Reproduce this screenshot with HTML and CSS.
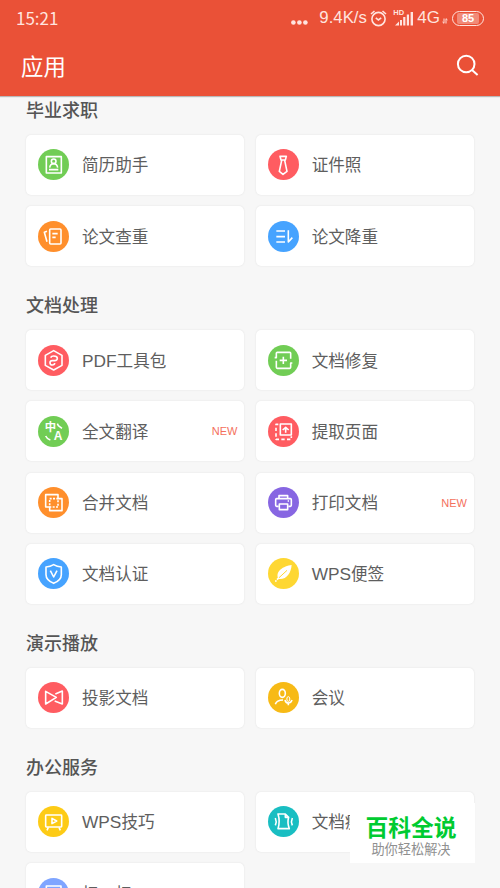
FILE: index.html
```html
<!DOCTYPE html>
<html lang="zh-CN">
<head>
  <meta charset="UTF-8">
  <title>应用</title>
  <link rel="stylesheet" href="styles.css">
</head>
<body>
<header class="header">
  <div class="status-bar">
    <span class="time">15:21</span>
    <div class="status-right">
      <svg class="dots" width="17" height="5" viewBox="0 0 17 5"><circle cx="2.4" cy="2.5" r="2.3"/><circle cx="8.4" cy="2.5" r="2.3"/><circle cx="14.4" cy="2.5" r="2.3"/></svg>
      <span class="speed">9.4K/s</span>
      <svg class="alarm" width="17" height="17" viewBox="0 0 17 17"><circle cx="8.5" cy="9" r="6.6"/><path d="M1 4L4.5 1M12.5 1L16 4M5.8 7.8L8.4 10L11.2 7.8"/></svg>
      <div class="signal">
        <span class="hd">HD</span>
        <svg width="20" height="15" viewBox="0 0 20 15"><path d="M1 14.5L5 10.5V14.5ZM6 9H8V14.5H6ZM9.2 6H11.4V14.5H9.2ZM12.8 3.5H15V14.5H12.8ZM16.6 1H19V14.5H16.6Z"/></svg>
      </div>
      <span class="network">4G</span>
      <svg class="updown" width="6" height="6" viewBox="0 0 6 6"><path d="M2 .5V5.3L.5 4M4 5.5V.7L5.5 2"/></svg>
      <span class="battery"><span>85</span></span>
    </div>
  </div>
  <div class="title-bar">
    <h1>应用</h1>
    <svg class="search" width="24" height="24" viewBox="0 0 24 24"><circle cx="10.2" cy="10" r="8.3"/><path d="M16 16L21.6 21"/></svg>
  </div>
</header>

<main class="content">
  <section class="group">
    <h2>毕业求职</h2>
    <div class="grid">
      <a class="card">
        <svg class="icon green" viewBox="0 0 93 93"><rect x="25" y="23" width="45" height="49"/><circle cx="47" cy="37" r="7"/><path d="M35 56Q37 44 47 44Q57 44 59 56M33 62H61"/></svg>
        <span class="name">简历助手</span>
      </a>
      <a class="card">
        <svg class="icon red" viewBox="0 0 93 93"><path d="M36 22H55L52 33H39ZM41 34L34 67L45 76L57 67L50 34"/></svg>
        <span class="name">证件照</span>
      </a>
      <a class="card">
        <svg class="icon orange" viewBox="0 0 93 93"><rect x="35" y="24" width="34" height="45" rx="3"/><path d="M43 38H59M43 49H53M27 31L19 34L27 62"/></svg>
        <span class="name">论文查重</span>
      </a>
      <a class="card">
        <svg class="icon blue" viewBox="0 0 93 93"><path d="M25 30H51M25 47H51M25 63H51M61 28V63L73 50"/></svg>
        <span class="name">论文降重</span>
      </a>
    </div>
  </section>

  <section class="group">
    <h2>文档处理</h2>
    <div class="grid">
      <a class="card">
        <svg class="icon red" viewBox="0 0 93 93"><path d="M47 17L72 31V61L47 75L22 61V31Z"/><path d="M38 38Q40 33 47 33Q58 33 58 40Q58 47 50 47H43Q36 47 36 53Q36 60 43 60Q50 60 50 54"/></svg>
        <span class="name"><span class="latin">PDF</span>工具包</span>
      </a>
      <a class="card">
        <svg class="icon green" viewBox="0 0 93 93"><path d="M20 38H25V25Q25 22 28 22H65Q68 22 68 25V41M25 47V67Q25 70 28 70H65Q68 70 68 67V54H73M46 35V57M35 46H57"/></svg>
        <span class="name">文档修复</span>
      </a>
      <a class="card">
        <svg class="icon green" viewBox="0 0 93 93"><text class="zh" x="20" y="45">中</text><text class="en" x="47" y="72">A</text><path d="M58 23L61 29L72 37M23 60Q27 69 37 72"/></svg>
        <span class="name">全文翻译</span>
        <span class="new">NEW</span>
      </a>
      <a class="card">
        <svg class="icon red" viewBox="0 0 93 93"><rect x="37" y="24" width="33" height="33"/><path d="M53 50V35M44 42L53 34L62 42"/><path class="dash" d="M31 25H24V70H70V61"/></svg>
        <span class="name">提取页面</span>
      </a>
      <a class="card">
        <svg class="icon orange" viewBox="0 0 93 93"><path d="M23 23H60V35H72V71H35V60H23Z"/><path class="dash-small" d="M35 35H60V60H35Z"/></svg>
        <span class="name">合并文档</span>
      </a>
      <a class="card">
        <svg class="icon purple" viewBox="0 0 93 93"><path d="M33 34V26H59V34M32 58H26Q23 58 23 55V38Q23 35 26 35H67Q70 35 70 38V55Q70 58 67 58H61M59 42H63"/><rect x="34" y="51" width="25" height="17"/></svg>
        <span class="name">打印文档</span>
        <span class="new">NEW</span>
      </a>
      <a class="card">
        <svg class="icon blue" viewBox="0 0 93 93"><path d="M47 20Q57 26 70 27V50Q70 66 47 76Q24 66 24 50V27Q37 26 47 20Z"/><path d="M37 38L47 57L57 38"/></svg>
        <span class="name">文档认证</span>
      </a>
      <a class="card">
        <svg class="icon yellow" viewBox="0 0 93 93"><path class="fill" d="M71 21C46 24 20 40 31 63C56 66 69 45 71 21Z"/><path class="vein" d="M57 37L31 61"/><path d="M33 59L27 65M21 69L26 69"/></svg>
        <span class="name"><span class="latin">WPS</span>便签</span>
      </a>
    </div>
  </section>

  <section class="group">
    <h2>演示播放</h2>
    <div class="grid">
      <a class="card">
        <svg class="icon red" viewBox="0 0 93 93"><path d="M23 28L55 46L23 66ZM52 36L73 27V66L50 57"/></svg>
        <span class="name">投影文档</span>
      </a>
      <a class="card">
        <svg class="icon gold" viewBox="0 0 93 93"><ellipse cx="43" cy="34" rx="9" ry="12"/><path d="M22 67Q26 54 45 54M51 54Q53 63 61 63Q69 63 72 54M61 63V70"/><ellipse class="thin" cx="61" cy="51" rx="4.5" ry="7"/></svg>
        <span class="name">会议</span>
      </a>
    </div>
  </section>

  <section class="group">
    <h2>办公服务</h2>
    <div class="grid">
      <a class="card">
        <svg class="icon amber" viewBox="0 0 93 93"><rect x="23" y="27" width="48" height="36" rx="2"/><path d="M42 37L56 45L42 53ZM31 64L27 73M63 64L67 73"/></svg>
        <span class="name"><span class="latin">WPS</span>技巧</span>
      </a>
      <a class="card">
        <svg class="icon teal" viewBox="0 0 93 93"><path d="M30 24H52L62 34Q57 50 64 68H30Q37 46 30 24ZM52 24V34H62M22 36Q27 47 22 58M73 36Q68 47 73 58"/></svg>
        <span class="name">文档瘦身</span>
      </a>
      <a class="card">
        <svg class="icon periwinkle" viewBox="0 0 93 93"><path d="M25 34V24H69V34M25 60V70H69V60M20 47H74"/></svg>
        <span class="name">扫一扫</span>
      </a>
    </div>
  </section>
</main>

<div class="watermark">
  <strong>百科全说</strong>
  <span>助你轻松解决</span>
</div>
</body>
</html>
```
FILE: styles.css
```css
* {
  box-sizing: border-box;
}

body {
  margin: 0;
  height: 888px;
  overflow: hidden;
  display: flex;
  flex-direction: column;
  background: #f7f7f7;
  color: #5e5e5e;
  font-family: "Liberation Sans", "Noto Sans CJK SC", sans-serif;
}

.header {
  flex: none;
  height: 96px;
  background: #ea5137;
  color: #ffe4df;
  box-shadow: 0 1px 1px rgba(0, 0, 0, 0.25);
  z-index: 1;
}

.status-bar {
  display: flex;
  align-items: center;
  justify-content: space-between;
  height: 36px;
  padding: 0 16px;
}

.time {
  font-family: "Noto Sans CJK SC", sans-serif;
  font-size: 17px;
  line-height: 36px;
}

.status-right {
  display: flex;
  align-items: center;
}

.status-right svg {
  fill: currentColor;
}

.dots {
  margin: 8px 11px 0 0;
}

.speed {
  width: 49px;
  font-size: 16.8px;
}

.status-right .alarm {
  margin: 0 7px 0 2px;
  fill: none;
  stroke: currentColor;
  stroke-width: 1.6;
}

.signal {
  position: relative;
  display: flex;
  margin-right: 3px;
}

.hd {
  position: absolute;
  left: -1px;
  top: -2px;
  font-size: 7.5px;
  font-weight: bold;
  line-height: 7px;
}

.network {
  font-size: 17px;
}

.status-right .updown {
  margin: 6px 4px 0 2px;
  fill: none;
  stroke: currentColor;
}

.battery {
  display: flex;
  width: 32px;
  height: 15px;
  padding: 1px 4px;
  border: 1.5px solid #ffe4df;
  border-radius: 8px;
}

.battery span {
  flex: 1;
  background: #f18a78;
  border-radius: 2px;
  color: #fff;
  font-size: 11px;
  font-weight: bold;
  line-height: 11px;
  text-align: center;
}

.title-bar {
  display: flex;
  align-items: center;
  justify-content: space-between;
  height: 60px;
  padding: 0 20px 0 21px;
}

.title-bar h1 {
  margin: -2px 0 0;
  color: #fff;
  font-size: 22.4px;
  font-weight: 400;
}

.search {
  fill: none;
  stroke: #fff;
  stroke-width: 2;
}

.content {
  flex: 1;
  min-height: 0;
  overflow: hidden;
  padding: 0 26px;
}

.group {
  margin-bottom: 25.1px;
}

.group h2 {
  margin: 0;
  height: 38.9px;
  color: #555;
  font-size: 18px;
  font-weight: 500;
  line-height: 30px;
}

.grid {
  display: grid;
  grid-template-columns: 1fr 1fr;
  grid-auto-rows: 60px;
  gap: 11.25px;
}

.card {
  display: flex;
  align-items: center;
  padding: 0 7px 0 12px;
  background: #fff;
  border-radius: 5px;
  box-shadow: 0 0 2px rgba(0, 0, 0, 0.1);
}

.icon {
  flex: none;
  width: 31px;
  height: 31px;
  margin-right: 13px;
  border-radius: 50%;
  fill: none;
  stroke: #fff;
  stroke-width: 4.8;
  stroke-linejoin: round;
}

.icon .fill {
  fill: #fff;
  stroke: none;
}

.icon .vein {
  stroke: #fed732;
  stroke-width: 3;
}

.icon .thin {
  stroke-width: 3;
}

.icon .dash {
  stroke-dasharray: 10 7;
}

.icon .dash-small {
  stroke-dasharray: 6 4;
}

.icon text {
  fill: #fff;
  stroke: none;
  font-weight: bold;
}

.icon .zh {
  font-size: 34px;
}

.icon .en {
  font-size: 36px;
}

.green { background: #71cd55; }
.red { background: #ff5c61; }
.orange { background: #ff8f2c; }
.blue { background: #46a3ff; }
.purple { background: #8766e2; }
.yellow { background: #fed732; }
.gold { background: #f7ba16; }
.amber { background: #fdcb16; }
.teal { background: #19bec2; }
.periwinkle { background: #7fa5ff; }

.name {
  flex: 1;
  padding-bottom: 1px;
  font-size: 16.6px;
  white-space: nowrap;
}

.latin {
  font-size: 17.3px;
}

.new {
  color: #f4705c;
  font-size: 11px;
}

.watermark {
  position: absolute;
  left: 350px;
  top: 803px;
  width: 125px;
  height: 60px;
  display: flex;
  flex-direction: column;
  align-items: center;
  padding: 11px 3px 0 0;
  background: #fff;
}

.watermark strong {
  color: #00cb31;
  font-size: 22.8px;
  font-weight: 700;
  line-height: 28px;
}

.watermark span {
  color: #8f8f8f;
  font-size: 13.2px;
  line-height: 16px;
}
```
